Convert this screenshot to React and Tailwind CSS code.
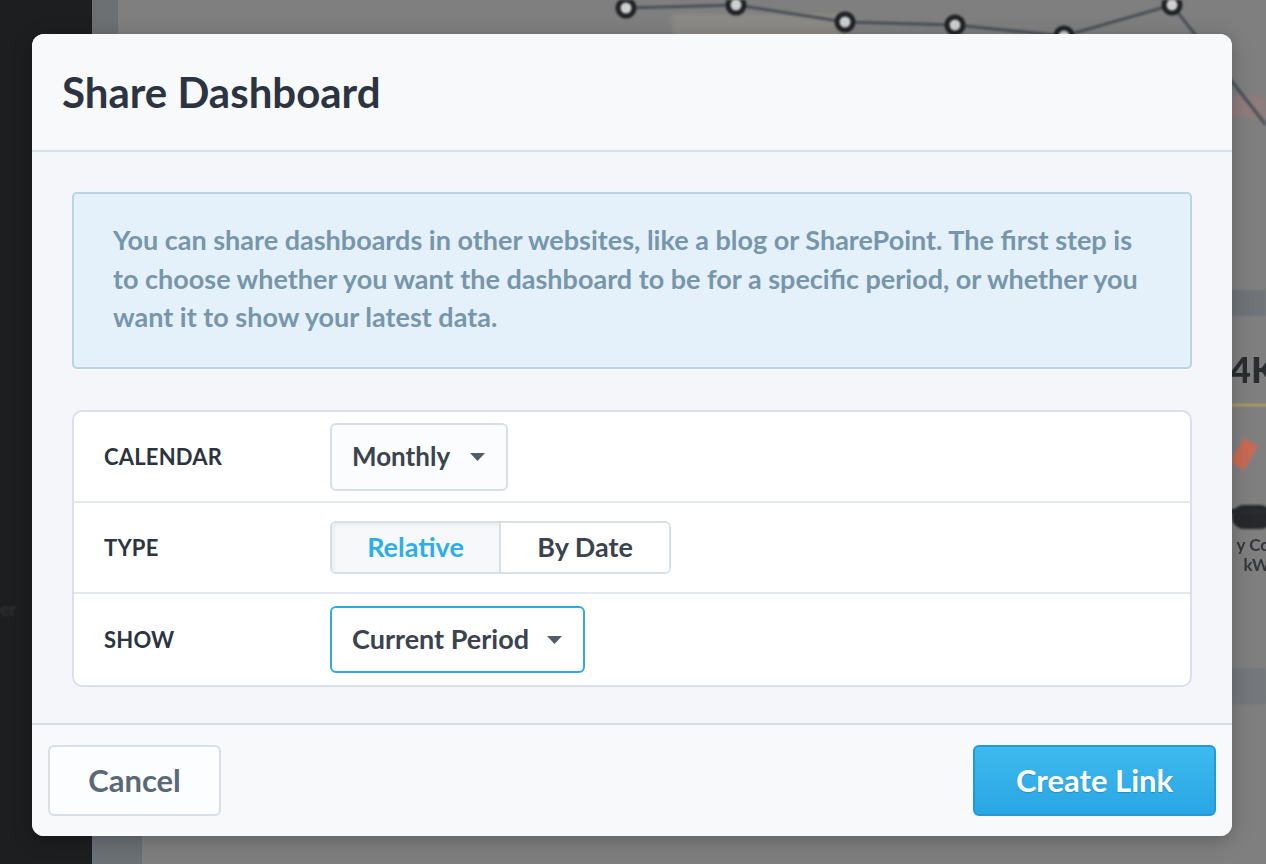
import React from 'react';

const font = { fontFamily: 'Lato, "Noto Sans", sans-serif' };

function Caret() {
  return (
    <svg width="15" height="8" viewBox="0 0 15 8" className="shrink-0">
      <path d="M0 0 L15 0 L7.5 8 Z" fill="#545c66" />
    </svg>
  );
}

function Backdrop() {
  return (
    <div className="absolute inset-0 flex">
      <div className="w-[92px] bg-[#1d1e20] relative">
        <span className="absolute left-0 top-[596px] text-[18px] font-bold text-[#2f3133] blur-[1px]">er</span>
      </div>
      <div className="flex-1 bg-[#7f7f7f] relative">
        <div className="absolute left-0 top-0 w-[26px] h-[40px] bg-[#6d7073]" />
        <div className="absolute left-0 bottom-0 w-[50px] h-[30px] bg-[#6b7075]" />
        <div className="absolute left-[580px] top-[14px] w-[170px] h-[30px] bg-[#8c8a86] blur-[2px]" />
        <div className="absolute right-0 top-[96px] w-[60px] h-[22px] bg-[#8f7c7c] blur-[2px]" />
        <div className="absolute right-0 top-[290px] w-[60px] h-[26px] bg-[#707478] blur-[1px]" />
        <div className="absolute right-[-10px] top-[342px] text-[36px] font-black text-[#2a2c2f] blur-[0.6px]">4K</div>
        <div className="absolute right-[-30px] top-[404px] w-[90px] h-[60px] rounded-full border-t-2 border-[#b9a55a] blur-[1px]" />
        <div className="absolute right-[14px] top-[440px] w-[16px] h-[28px] bg-[#c96a52] rotate-[30deg] blur-[1px]" />
        <div className="absolute right-[-6px] top-[505px] w-[40px] h-[24px] rounded-full bg-[#26282b] blur-[1px]" />
        <div className="absolute right-0 top-[509px] w-[40px] h-[5px] bg-[#2a2c2f] blur-[1px]" />
        <div className="absolute right-[-4px] top-[535px] text-[17px] font-bold text-[#34363a] leading-[20px] text-right blur-[0.6px]">
          y Co<br />kW
        </div>
        <div className="absolute right-0 top-[668px] w-[60px] h-[36px] bg-[#74787c] blur-[1px]" />
        <svg className="absolute left-0 top-0 blur-[1px]" width="1174" height="140" viewBox="92 0 1174 140">
          <polyline
            points="626,8 736,5 845,22 955,25 1064,36 1172,5 1266,125"
            fill="none"
            stroke="#4b5058"
            strokeWidth="3"
          />
          {[[626, 8], [736, 5], [845, 22], [955, 25], [1064, 36], [1172, 5]].map(([cx, cy]) => (
            <circle key={cx} cx={cx} cy={cy} r="8" fill="#cfcfcf" stroke="#1f2124" strokeWidth="5" />
          ))}
        </svg>
      </div>
    </div>
  );
}

function Row({ label, children, last }) {
  return (
    <div className={`flex items-center h-[91px] ${last ? '' : 'border-b-2 border-[#e3e8ee]'}`}>
      <div className="w-[256px] pl-[30px] text-[22px] font-bold text-[#2c3440] tracking-[0.2px]">{label}</div>
      {children}
    </div>
  );
}

export default function App() {
  return (
    <div className="relative w-[1266px] h-[864px] overflow-hidden" style={font}>
      <Backdrop />

      <div className="absolute left-[32px] top-[34px] w-[1200px] h-[802px] rounded-[12px] overflow-hidden flex flex-col bg-[#f4f6f9] shadow-[0_4px_20px_rgba(0,0,0,0.25)]">
        <div className="h-[118px] shrink-0 flex items-center px-[30px] bg-[#f8f9fb] border-b-2 border-[#d7e0e8]">
          <h1 className="text-[42px] font-bold text-[#2b3440] leading-none">Share Dashboard</h1>
        </div>

        <div className="flex-1 px-[40px] pt-[40px]">
          <div className="h-[177px] rounded-[5px] border-2 border-[#bcd4e1] bg-[#e4f1fa] pl-[39px] pr-[30px] pt-[27px]">
            <p className="text-[27px] font-bold leading-[38.5px] text-[#7896aa]">
              You can share dashboards in other websites, like a blog or SharePoint. The first step is to choose
              whether you want the dashboard to be for a specific period, or whether you want it to show your latest
              data.
            </p>
          </div>

          <div className="mt-[41px] rounded-[10px] border-2 border-[#d9e0e7] bg-white overflow-hidden">
            <Row label="CALENDAR">
              <button className="h-[68px] w-[178px] flex items-center justify-between pl-[20px] pr-[21px] rounded-[6px] border-2 border-[#d8dfe6] bg-[#fbfcfd] text-[26px] font-bold text-[#3a434e]">
                Monthly <Caret />
              </button>
            </Row>
            <Row label="TYPE">
              <div className="flex h-[53px] rounded-[6px] border-2 border-[#d8dfe6] overflow-hidden">
                <button className="w-[169px] bg-[#f6f8fa] shadow-[inset_2px_2px_4px_rgba(0,0,0,0.06)] text-[27px] font-bold text-[#2eaee6] border-r-2 border-[#d8dfe6]">
                  Relative
                </button>
                <button className="w-[168px] bg-white text-[27px] font-bold text-[#3a434e]">By Date</button>
              </div>
            </Row>
            <Row label="SHOW" last>
              <button className="h-[67px] w-[255px] flex items-center justify-between pl-[20px] pr-[21px] rounded-[6px] border-2 border-[#2fabe3] bg-white text-[27px] font-bold text-[#3a434e]">
                Current Period <Caret />
              </button>
            </Row>
          </div>
        </div>

        <div className="h-[113px] shrink-0 flex items-center justify-between px-[16px] bg-[#f8f9fb] border-t-2 border-[#d7e0e8]">
          <button className="h-[71px] w-[173px] rounded-[6px] border-2 border-[#d8dfe6] bg-[#fcfdfe] text-[31px] font-bold text-[#5b6876]">
            Cancel
          </button>
          <button className="h-[71px] w-[243px] rounded-[6px] border-2 border-[#2499d6] bg-gradient-to-b from-[#3dbaee] to-[#29a6e4] text-[31px] font-bold text-white [text-shadow:0_1px_1px_rgba(0,0,0,0.2)]">
            Create Link
          </button>
        </div>
      </div>
    </div>
  );
}
